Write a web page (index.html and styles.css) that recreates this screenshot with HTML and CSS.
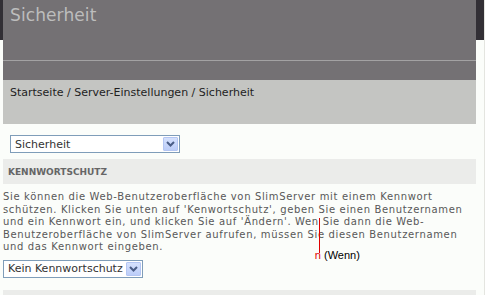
FILE: index.html
```html
<!DOCTYPE html>
<html lang="de">
<head>
  <meta charset="UTF-8" />
  <title>Sicherheit</title>
  <meta name="viewport" content="width=device-width, initial-scale=1.0" />
  <link rel="stylesheet" href="styles.css">
</head>
<body>

  <div class="page">
    <div class="header">
      <div class="header-top">
        <h1>Sicherheit</h1>
      </div>
    </div>

    <div class="crumbs">Startseite / Server-Einstellungen / Sicherheit</div>

    <div class="content">
      <div class="select-row">
        <div class="fake-select wide">
          <span class="select-text">Sicherheit</span>
          <span class="select-btn"><svg width="9" height="6" viewBox="0 0 9 6"><path d="M1 1 L4.5 4.5 L8 1" fill="none" stroke="#4a5d86" stroke-width="2"/></svg></span>
        </div>
      </div>

      <div class="section-title">KENNWORTSCHUTZ</div>

      <p class="intro">
        Sie können die Web-Benutzeroberfläche von SlimServer mit einem Kennwort<br>
        schützen. Klicken Sie unten auf 'Kenwortschutz', geben Sie einen Benutzernamen<br>
        und ein Kennwort ein, und klicken Sie auf 'Ändern'. <span class="typo">Wen<span class="mark"><span class="mark-line"></span><span class="mark-fix"><b>n</b> (Wenn)</span></span></span> Sie dann die Web-<br>
        Benutzeroberfläche von SlimServer aufrufen, müssen Sie diesen Benutzernamen<br>
        und das Kennwort eingeben.
      </p>

      <div class="fake-select short">
        <span class="select-text">Kein Kennwortschutz</span>
        <span class="select-btn"><svg width="9" height="6" viewBox="0 0 9 6"><path d="M1 1 L4.5 4.5 L8 1" fill="none" stroke="#4a5d86" stroke-width="2"/></svg></span>
      </div>

      <div class="bottom-bar"></div>
    </div>
  </div>

</body>
</html>
```

FILE: styles.css
```css
body {
  margin: 0;
  font-family: 'DejaVu Sans', Verdana, sans-serif;
  background:
    linear-gradient(to right, transparent 484px, #e4e5e0 484px),
    linear-gradient(#322f35 0, #322f35 40px, #fbfdfa 40px);
  overflow: hidden;
}

.page {
  margin-left: 3px;
  width: 473px;
}

.header {
  height: 80px;
  background: #747174;
}

.header-top {
  height: 61px;
  border-bottom: 1px solid #a3a2a3;
  box-sizing: border-box;
}

h1 {
  margin: 0;
  padding: 5px 0 0 7px;
  font-size: 17px;
  letter-spacing: 0.1px;
  font-weight: normal;
  color: #bdbdbd;
}

.crumbs {
  height: 44px;
  background: #c4c5c2;
  padding: 6px 0 0 7px;
  box-sizing: border-box;
  font-size: 11px;
  color: #1e1e1e;
}

.content {
  background: #fbfdfa;
}

.select-row {
  display: flex;
  padding: 11px 0 6px 7px;
}

.fake-select {
  display: flex;
  align-items: center;
  height: 18px;
  border: 1px solid #7f9db9;
  box-sizing: border-box;
  background: #fff;
  font-size: 11px;
  color: #333;
  padding: 0 1px 0 4px;
  gap: 3px;
  white-space: nowrap;
}

.fake-select.wide {
  width: 170px;
}

.fake-select.short {
  width: 140px;
}

.select-text {
  flex: 1;
  overflow: hidden;
}

.select-btn {
  flex: none;
  width: 15px;
  height: 14px;
  background: linear-gradient(#d5e1fd, #bccdf8);
  border: 1px solid #b4c6f3;
  box-sizing: border-box;
  border-radius: 1px;
  display: flex;
  align-items: center;
  justify-content: center;
}

.section-title {
  height: 25px;
  background: #ebecea;
  padding: 8px 0 0 5px;
  box-sizing: border-box;
  font-size: 9px;
  font-weight: bold;
  color: #666;
}

.intro {
  margin: 7px 0 6px 0;
  font-size: 10px;
  letter-spacing: 0.65px;
  line-height: 12.5px;
  color: #585858;
}

.typo {
  position: relative;
}

.mark {
  position: absolute;
  left: 100%;
  top: 0;
}

.mark-line {
  position: absolute;
  left: 0;
  top: 2px;
  width: 1px;
  height: 35px;
  background: #e00000;
}

.mark-fix {
  position: absolute;
  left: -4px;
  top: 33px;
  white-space: nowrap;
  letter-spacing: 0;
  font-family: 'Liberation Sans', Arial, sans-serif;
  font-size: 11px;
  color: #000;
}

.mark-fix b {
  font-weight: normal;
  color: #e00000;
}

.bottom-bar {
  margin-top: 12px;
  height: 5px;
  background: #ebecea;
}
```
